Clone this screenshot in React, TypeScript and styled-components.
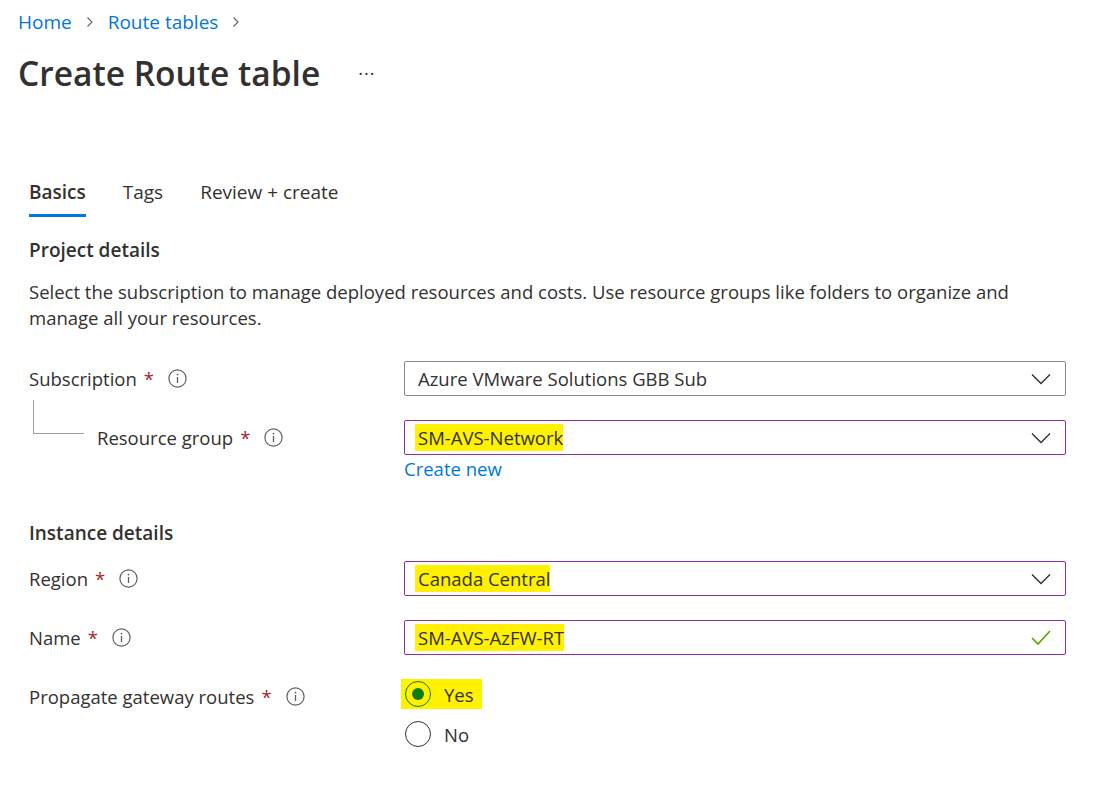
import React from "react";
import styled, { createGlobalStyle } from "styled-components";

const GlobalStyle = createGlobalStyle`
  body {
    margin: 0;
    background: #fff;
    color: #323130;
    font-family: "Open Sans", "Liberation Sans", sans-serif;
  }
`;

const Page = styled.div`
  padding: 9px 18px 0;
`;

const Breadcrumb = styled.nav`
  display: flex;
  align-items: center;
  gap: 12px;
  font-size: 19px;
  line-height: 26px;
`;

const Crumb = styled.a`
  color: #0078d4;
  text-decoration: none;
`;

const TitleRow = styled.div`
  display: flex;
  align-items: center;
  margin-top: 16px;
  gap: 38px;
`;

const Title = styled.h1`
  margin: 0;
  font-size: 33.5px;
  line-height: 44px;
  font-weight: 600;
`;

const More = styled.span`
  font-size: 18px;
  letter-spacing: 1px;
  color: #323130;
`;

const Content = styled.div`
  padding-left: 11px;
  margin-top: 84px;
`;

const Tabs = styled.div`
  display: flex;
  gap: 37px;
`;

const Tab = styled.div<{ $active?: boolean }>`
  font-size: 19px;
  line-height: 26px;
  padding-bottom: 9px;
  font-weight: ${(p) => (p.$active ? 600 : 400)};
  border-bottom: 3px solid ${(p) => (p.$active ? "#0078d4" : "transparent")};
`;

const SectionTitle = styled.h2<{ $gap: number }>`
  margin: ${(p) => p.$gap}px 0 0;
  font-size: 19px;
  line-height: 26px;
  font-weight: 600;
`;

const Description = styled.p`
  margin: 16px 0 0;
  font-size: 18.5px;
  line-height: 26px;
  max-width: 1010px;
`;

const Form = styled.div<{ $gap: number }>`
  display: grid;
  grid-template-columns: 375px 662px;
  row-gap: 24px;
  margin-top: ${(p) => p.$gap}px;
`;

const LabelCell = styled.div`
  display: flex;
  align-items: center;
  height: 35px;
  font-size: 18.5px;
  white-space: nowrap;
`;

const Connector = styled.span`
  align-self: flex-start;
  width: 50px;
  height: 33px;
  margin: -20px 13px 0 4px;
  border-left: 1px solid #a19f9d;
  border-bottom: 1px solid #a19f9d;
  flex: none;
`;

const Star = styled.span`
  color: #a4262c;
  margin-left: 7px;
`;

const Info = styled.svg`
  margin-left: 14px;
  flex: none;
`;

const Field = styled.div`
  display: flex;
  flex-direction: column;
`;

const Box = styled.div<{ $dirty?: boolean }>`
  display: flex;
  align-items: center;
  justify-content: space-between;
  height: 35px;
  box-sizing: border-box;
  padding: 0 14px 0 13px;
  border: 1px solid ${(p) => (p.$dirty ? "#8a2da5" : "#8a8886")};
  border-radius: 2px;
  font-size: 18.5px;
`;

const Highlight = styled.span`
  background: #fff100;
  padding: 1px 0 1px 3px;
  margin-left: -3px;
`;

const Link = styled.a`
  color: #0078d4;
  font-size: 18.5px;
  line-height: 26px;
  margin-top: 1px;
`;

const RadioGroup = styled.div`
  display: flex;
  flex-direction: column;
  gap: 10px;
`;

const RadioRow = styled.div<{ $marked?: boolean }>`
  display: flex;
  align-items: center;
  gap: 13px;
  height: 30px;
  width: fit-content;
  padding: 0 8px 0 4px;
  margin-left: -3px;
  font-size: 18.5px;
  background: ${(p) => (p.$marked ? "#fff100" : "transparent")};
`;

const Radio = styled.span<{ $checked?: boolean }>`
  width: 26px;
  height: 26px;
  box-sizing: border-box;
  border-radius: 50%;
  border: 1px solid ${(p) => (p.$checked ? "#107c10" : "#323130")};
  display: flex;
  align-items: center;
  justify-content: center;
  &::after {
    content: "";
    width: 12px;
    height: 12px;
    border-radius: 50%;
    background: ${(p) => (p.$checked ? "#107c10" : "transparent")};
  }
`;

const Chevron = ({ color = "#605e5c" }: { color?: string }) => (
  <svg width="12" height="12" viewBox="0 0 12 12">
    <path d="M3.5 1.5 8 6l-4.5 4.5" fill="none" stroke={color} strokeWidth="1.1" />
  </svg>
);

const Down = () => (
  <svg width="20" height="12" viewBox="0 0 20 12">
    <path d="M1 1.5l9 9 9-9" fill="none" stroke="#323130" strokeWidth="1.4" />
  </svg>
);

const Check = () => (
  <svg width="20" height="16" viewBox="0 0 20 16">
    <path d="M1 8l6 6L19 1" fill="none" stroke="#57a300" strokeWidth="1.6" />
  </svg>
);

const InfoIcon = () => (
  <Info width="19" height="19" viewBox="0 0 19 19">
    <circle cx="9.5" cy="9.5" r="8.6" fill="none" stroke="#605e5c" strokeWidth="1.2" />
    <circle cx="9.5" cy="5.6" r="0.9" fill="#605e5c" />
    <path d="M9.5 8v6" stroke="#605e5c" strokeWidth="1.3" />
  </Info>
);

const Label = ({ text, tree }: { text: string; tree?: boolean }) => (
  <LabelCell>
    {tree && <Connector />}
    {text}
    <Star>*</Star>
    <InfoIcon />
  </LabelCell>
);

export default function App() {
  return (
    <>
      <GlobalStyle />
      <Page>
        <Breadcrumb>
          <Crumb>Home</Crumb>
          <Chevron />
          <Crumb>Route tables</Crumb>
          <Chevron />
        </Breadcrumb>
        <TitleRow>
          <Title>Create Route table</Title>
          <More>···</More>
        </TitleRow>
        <Content>
          <Tabs>
            <Tab $active>Basics</Tab>
            <Tab>Tags</Tab>
            <Tab>Review + create</Tab>
          </Tabs>
          <SectionTitle $gap={20}>Project details</SectionTitle>
          <Description>
            Select the subscription to manage deployed resources and costs. Use resource groups like folders to
            organize and manage all your resources.
          </Description>
          <Form $gap={30}>
            <Label text="Subscription" />
            <Field>
              <Box>
                Azure VMware Solutions GBB Sub
                <Down />
              </Box>
            </Field>
            <Label text="Resource group" tree />
            <Field>
              <Box $dirty>
                <Highlight>SM-AVS-Network</Highlight>
                <Down />
              </Box>
              <Link>Create new</Link>
            </Field>
          </Form>
          <SectionTitle $gap={38}>Instance details</SectionTitle>
          <Form $gap={15}>
            <Label text="Region" />
            <Field>
              <Box $dirty>
                <Highlight>Canada Central</Highlight>
                <Down />
              </Box>
            </Field>
            <Label text="Name" />
            <Field>
              <Box $dirty>
                <Highlight>SM-AVS-AzFW-RT</Highlight>
                <Check />
              </Box>
            </Field>
            <Label text="Propagate gateway routes" />
            <RadioGroup>
              <RadioRow $marked>
                <Radio $checked />
                Yes
              </RadioRow>
              <RadioRow>
                <Radio />
                No
              </RadioRow>
            </RadioGroup>
          </Form>
        </Content>
      </Page>
    </>
  );
}
